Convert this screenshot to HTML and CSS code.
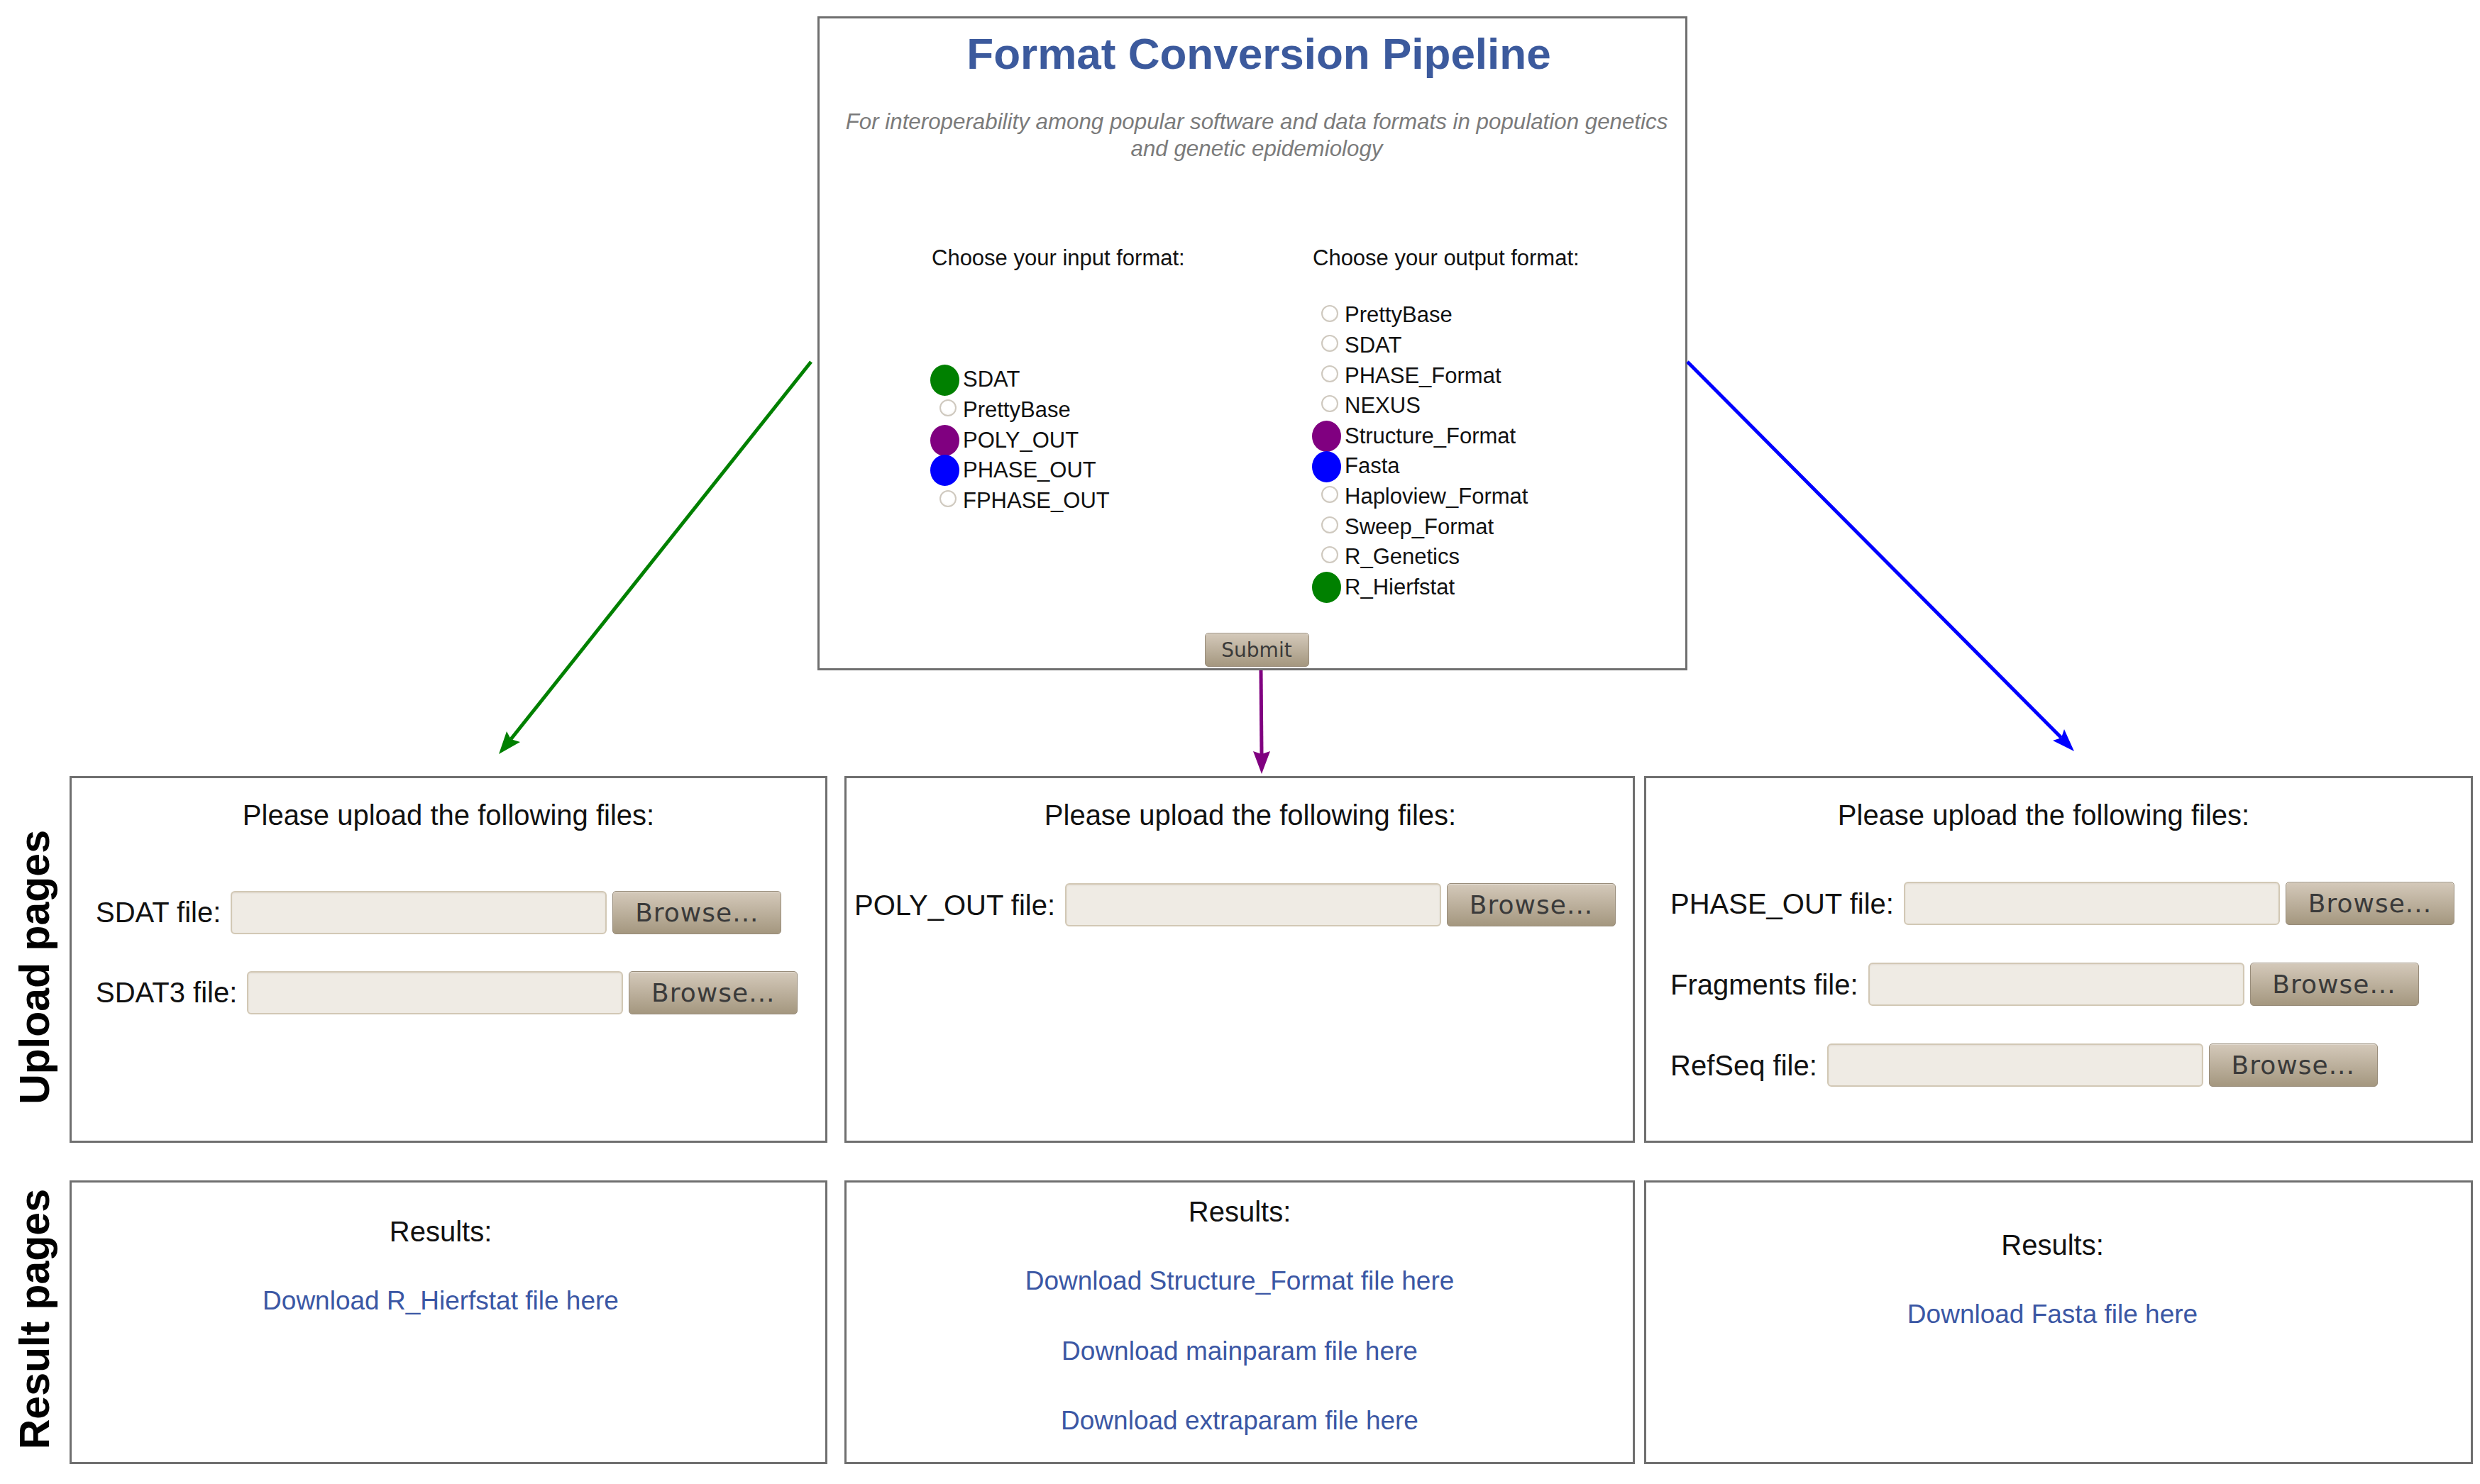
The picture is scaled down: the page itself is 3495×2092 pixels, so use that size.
FILE: index.html
```html
<!DOCTYPE html>
<html lang="en">
<head>
<meta charset="utf-8">
<title>Format Conversion Pipeline</title>
<link rel="stylesheet" href="styles.css">
</head>
<body>
<div class="page">
  <section class="top">
    <div class="pipeline">
      <h1 class="title">Format Conversion Pipeline</h1>
      <p class="subtitle">For interoperability among popular software and data formats in population genetics<br>and genetic epidemiology</p>
      <div class="choices">
        <div class="col col-in">
          <div class="heading">Choose your input format:</div>
          <ul class="opts opts-in">
            <li class="opt"><span class="slot"><span class="dot dot-green"></span></span>SDAT</li>
            <li class="opt"><span class="slot"><span class="radio"></span></span>PrettyBase</li>
            <li class="opt"><span class="slot"><span class="dot dot-purple"></span></span>POLY_OUT</li>
            <li class="opt"><span class="slot"><span class="dot dot-blue"></span></span>PHASE_OUT</li>
            <li class="opt"><span class="slot"><span class="radio"></span></span>FPHASE_OUT</li>
          </ul>
        </div>
        <div class="col col-out">
          <div class="heading">Choose your output format:</div>
          <ul class="opts opts-out">
            <li class="opt"><span class="slot"><span class="radio"></span></span>PrettyBase</li>
            <li class="opt"><span class="slot"><span class="radio"></span></span>SDAT</li>
            <li class="opt"><span class="slot"><span class="radio"></span></span>PHASE_Format</li>
            <li class="opt"><span class="slot"><span class="radio"></span></span>NEXUS</li>
            <li class="opt"><span class="slot"><span class="dot dot-purple"></span></span>Structure_Format</li>
            <li class="opt"><span class="slot"><span class="dot dot-blue"></span></span>Fasta</li>
            <li class="opt"><span class="slot"><span class="radio"></span></span>Haploview_Format</li>
            <li class="opt"><span class="slot"><span class="radio"></span></span>Sweep_Format</li>
            <li class="opt"><span class="slot"><span class="radio"></span></span>R_Genetics</li>
            <li class="opt"><span class="slot"><span class="dot dot-green"></span></span>R_Hierfstat</li>
          </ul>
        </div>
      </div>
      <div class="submit-row"><button class="btn submit" type="button">Submit</button></div>
    </div>
  </section>

  <section class="grid">
    <div class="side side-upload"><span>Upload pages</span></div>

    <div class="box upload upload-1">
      <div class="box-head">Please upload the following files:</div>
      <div class="rows">
        <div class="file-row"><span class="label">SDAT file:</span><span class="field"></span><button class="btn browse" type="button">Browse...</button></div>
        <div class="file-row"><span class="label">SDAT3 file:</span><span class="field"></span><button class="btn browse" type="button">Browse...</button></div>
      </div>
    </div>

    <div class="box box-2 upload upload-2">
      <div class="box-head">Please upload the following files:</div>
      <div class="rows">
        <div class="file-row"><span class="label">POLY_OUT file:</span><span class="field"></span><button class="btn browse" type="button">Browse...</button></div>
      </div>
    </div>

    <div class="box box-3 upload upload-3">
      <div class="box-head">Please upload the following files:</div>
      <div class="rows">
        <div class="file-row"><span class="label">PHASE_OUT file:</span><span class="field"></span><button class="btn browse" type="button">Browse...</button></div>
        <div class="file-row"><span class="label">Fragments file:</span><span class="field"></span><button class="btn browse" type="button">Browse...</button></div>
        <div class="file-row"><span class="label">RefSeq file:</span><span class="field"></span><button class="btn browse" type="button">Browse...</button></div>
      </div>
    </div>

    <div class="side side-result"><span>Result pages</span></div>

    <div class="box results results-1">
      <div class="box-head">Results:</div>
      <a class="link" href="#">Download R_Hierfstat file here</a>
    </div>

    <div class="box box-2 results results-2">
      <div class="box-head">Results:</div>
      <a class="link" href="#">Download Structure_Format file here</a>
      <a class="link" href="#">Download mainparam file here</a>
      <a class="link" href="#">Download extraparam file here</a>
    </div>

    <div class="box box-3 results results-3">
      <div class="box-head">Results:</div>
      <a class="link" href="#">Download Fasta file here</a>
    </div>
  </section>

  <svg class="arrows" width="3495" height="2092" viewBox="0 0 3495 2092" aria-hidden="true">
    <line x1="1143" y1="510" x2="720" y2="1042" stroke="#008000" stroke-width="5"/>
    <polygon points="703,1063 714,1031 720,1042 733,1046" fill="#008000"/>
    <line x1="1777" y1="945" x2="1778" y2="1063" stroke="#800080" stroke-width="5"/>
    <polygon points="1778,1091 1766,1059 1778,1063 1790,1059" fill="#800080"/>
    <line x1="2378" y1="510" x2="2905" y2="1040" stroke="#0000ff" stroke-width="5"/>
    <polygon points="2923,1059 2909,1028 2905,1040 2893,1044" fill="#0000ff"/>
  </svg>
</div>
</body>
</html>
```

FILE: styles.css
```css
* {
  box-sizing: border-box;
}

html, body {
  margin: 0;
  padding: 0;
  background: #ffffff;
}

body {
  font-family: "Liberation Sans", Arial, sans-serif;
  color: #111111;
}

.page {
  position: relative;
  width: 3495px;
  height: 2092px;
  overflow: hidden;
}

/* ---------- top pipeline form ---------- */
.top {
  padding: 23px 0 0 1152px;
}

.pipeline {
  width: 1226px;
  height: 922px;
  border: 3px solid #6f6f6f;
  display: flex;
  flex-direction: column;
  background: #ffffff;
}

.title {
  margin: 14px 0 0;
  padding-left: 18px;
  text-align: center;
  font-size: 62px;
  line-height: 71px;
  font-weight: bold;
  color: #3c5a9d;
}

.subtitle {
  margin: 42px 0 0;
  padding-left: 12px;
  text-align: center;
  font-style: italic;
  font-size: 31.3px;
  line-height: 38.4px;
  color: #7b7b7b;
}

.choices {
  display: flex;
  margin: 113px 0 0 157px;
}

.col-in {
  width: 538px;
}

.heading {
  font-size: 31px;
  line-height: 42.6px;
  height: 42.6px;
  white-space: nowrap;
}

.col-in .heading {
  padding-left: 1px;
}

.opts {
  list-style: none;
  margin: 0;
  padding: 0;
}

.opts-in {
  margin-top: 129px;
}

.opts-out {
  margin-top: 38px;
}

.opt {
  display: flex;
  align-items: center;
  height: 42.6px;
  font-size: 31px;
  line-height: 42.6px;
  white-space: nowrap;
}

.slot {
  width: 45px;
  height: 42.6px;
  flex: none;
  display: flex;
  justify-content: flex-end;
  align-items: center;
}

.radio {
  width: 24px;
  height: 24px;
  flex: none;
  border-radius: 50%;
  border: 2px solid #cfc9bf;
  background: radial-gradient(circle at 50% 40%, #ffffff 55%, #f1eee9);
  margin: 0 9px 6px 0;
}

.dot {
  width: 41px;
  height: 44px;
  flex: none;
  border-radius: 50%;
  margin-right: 5px;
}

.dot-green {
  background: #008000;
}

.dot-purple {
  background: #800080;
}

.dot-blue {
  background: #0000ff;
}

.submit-row {
  display: flex;
  justify-content: center;
  padding-left: 12px;
  margin-top: 43px;
}

.btn {
  font-family: "DejaVu Sans", "Liberation Sans", sans-serif;
  color: #3a3a3a;
  background: linear-gradient(#d4c9ba, #a4977f);
  border: 1px solid #988c7a;
  border-radius: 5px;
  padding: 0;
  margin: 0;
  box-shadow: inset 0 1px 0 rgba(255, 255, 255, 0.35);
  flex: none;
}

.submit {
  width: 147px;
  height: 48px;
  font-size: 28px;
}

/* ---------- lower grid ---------- */
.grid {
  display: grid;
  grid-template-columns: 98px 1068px 1138px 1181px;
  grid-template-rows: 517px 400px;
  row-gap: 53px;
  margin-top: 149px;
}

.side {
  display: flex;
  align-items: center;
  justify-content: center;
}

.side span {
  writing-mode: vertical-rl;
  transform: rotate(180deg);
  font-size: 59px;
  line-height: 66px;
  font-weight: bold;
  color: #000000;
  white-space: nowrap;
}

.side-upload {
  padding-top: 22px;
}

.side-result {
  padding-bottom: 8px;
}

.box {
  border: 3px solid #6f6f6f;
  background: #ffffff;
}

.box-2 {
  justify-self: end;
  width: 1114px;
}

.box-3 {
  justify-self: end;
  width: 1168px;
}

.box-head {
  font-size: 40px;
  line-height: 46px;
  text-align: center;
  color: #111111;
  white-space: nowrap;
}

/* upload boxes */
.upload .box-head {
  margin-top: 29px;
}

.upload-2 .box-head {
  padding-left: 30px;
}

.upload-3 .box-head {
  padding-right: 42px;
}

.rows {
  display: flex;
  flex-direction: column;
  row-gap: 52.4px;
  padding-left: 34px;
}

.upload-1 .rows {
  margin-top: 83.6px;
}

.upload-2 .rows {
  margin-top: 73px;
  padding-left: 11px;
}

.upload-3 .rows {
  margin-top: 71px;
  row-gap: 53px;
}

.file-row {
  display: flex;
  align-items: center;
  height: 61px;
}

.label {
  font-size: 40px;
  line-height: 46px;
  white-space: nowrap;
  margin-right: 14px;
}

.field {
  width: 530px;
  height: 61px;
  flex: none;
  background: #efebe4;
  border: 2px solid #d2c8b5;
  border-radius: 6px;
  box-shadow: inset 0 1px 2px rgba(120, 100, 70, 0.12);
}

.browse {
  width: 238px;
  height: 61px;
  margin-left: 8px;
  font-size: 36px;
  letter-spacing: 1px;
}

/* result boxes */
.results-1 .box-head {
  margin-top: 46px;
}

.results-2 .box-head {
  margin-top: 18px;
}

.results-3 .box-head {
  margin-top: 65px;
}

.results-1 {
  padding-right: 22px;
}

.results-3 {
  padding-right: 17px;
}

.link {
  display: block;
  font-size: 37px;
  line-height: 44px;
  color: #3b57a4;
  text-decoration: none;
  text-align: center;
  white-space: nowrap;
  margin-top: 54.7px;
}

.results .box-head + .link {
  margin-top: 53px;
}

/* connector arrows drawn over the page */
.arrows {
  position: absolute;
  left: 0;
  top: 0;
  pointer-events: none;
}
```
